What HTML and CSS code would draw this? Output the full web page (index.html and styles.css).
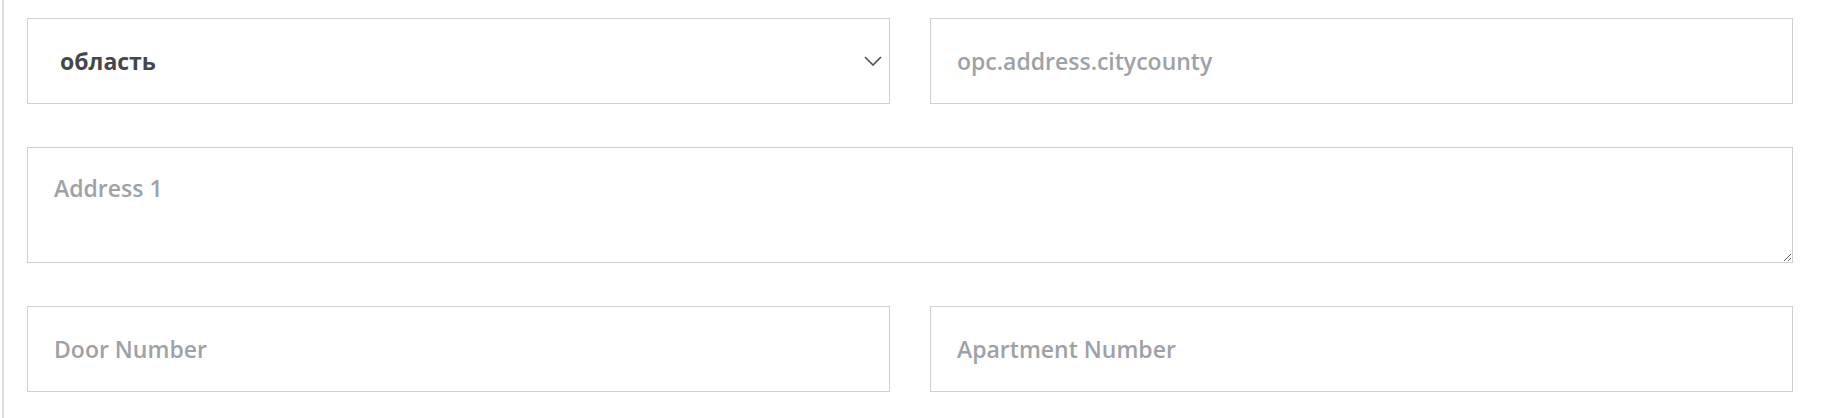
FILE: index.html
```html
<!DOCTYPE html>
<html lang="ru">
<head>
<meta charset="utf-8">
<title>Address form</title>
<link rel="stylesheet" href="styles.css">
</head>
<body>
<div class="page">
  <form class="form">
    <div class="row two">
      <div class="select-wrap">
        <select class="field select">
          <option>область</option>
        </select>
        <svg class="chevron" width="18" height="10" viewBox="0 0 18 10" aria-hidden="true">
          <path d="M1 1 L9 9 L17 1" fill="none" stroke="#4a4c4f" stroke-width="1.6"/>
        </svg>
      </div>
      <input class="field" type="text" placeholder="opc.address.citycounty">
    </div>
    <div class="row">
      <textarea class="field area" placeholder="Address 1"></textarea>
    </div>
    <div class="row two">
      <input class="field" type="text" placeholder="Door Number">
      <input class="field" type="text" placeholder="Apartment Number">
    </div>
  </form>
</div>
</body>
</html>
```
FILE: styles.css
```css
* { box-sizing: border-box; }
html, body { margin: 0; padding: 0; background: #fff; }
body { font-family: "Open Sans", "Liberation Sans", sans-serif; }
.page {
  margin-left: 2px;
  border-left: 2px solid #dedfe0;
  min-height: 418px;
  padding: 18px 29px 0 23px;
}
.form { display: flex; flex-direction: column; gap: 43px; }
.row { display: grid; grid-template-columns: 1fr; }
.row.two { grid-template-columns: 1fr 1fr; column-gap: 40px; }
.field {
  display: block;
  width: 100%;
  height: 86px;
  margin: 0;
  border: 1px solid #cdd0d2;
  border-radius: 0;
  background: #fff;
  padding: 0 26px;
  font-family: "Open Sans", "Liberation Sans", sans-serif;
  font-size: 23px;
  font-weight: 600;
  color: #404245;
  outline: none;
}
.field::placeholder { color: #9ea2a6; opacity: 1; }
.select-wrap { position: relative; }
.select {
  appearance: none;
  -webkit-appearance: none;
  padding-left: 32px;
  padding-right: 50px;
  font-weight: 700;
  color: #45474a;
}
.chevron {
  position: absolute;
  right: 8px;
  top: 38px;
  pointer-events: none;
}
.area {
  height: 116px;
  padding-top: 24px;
  resize: vertical;
  line-height: normal;
}
```
